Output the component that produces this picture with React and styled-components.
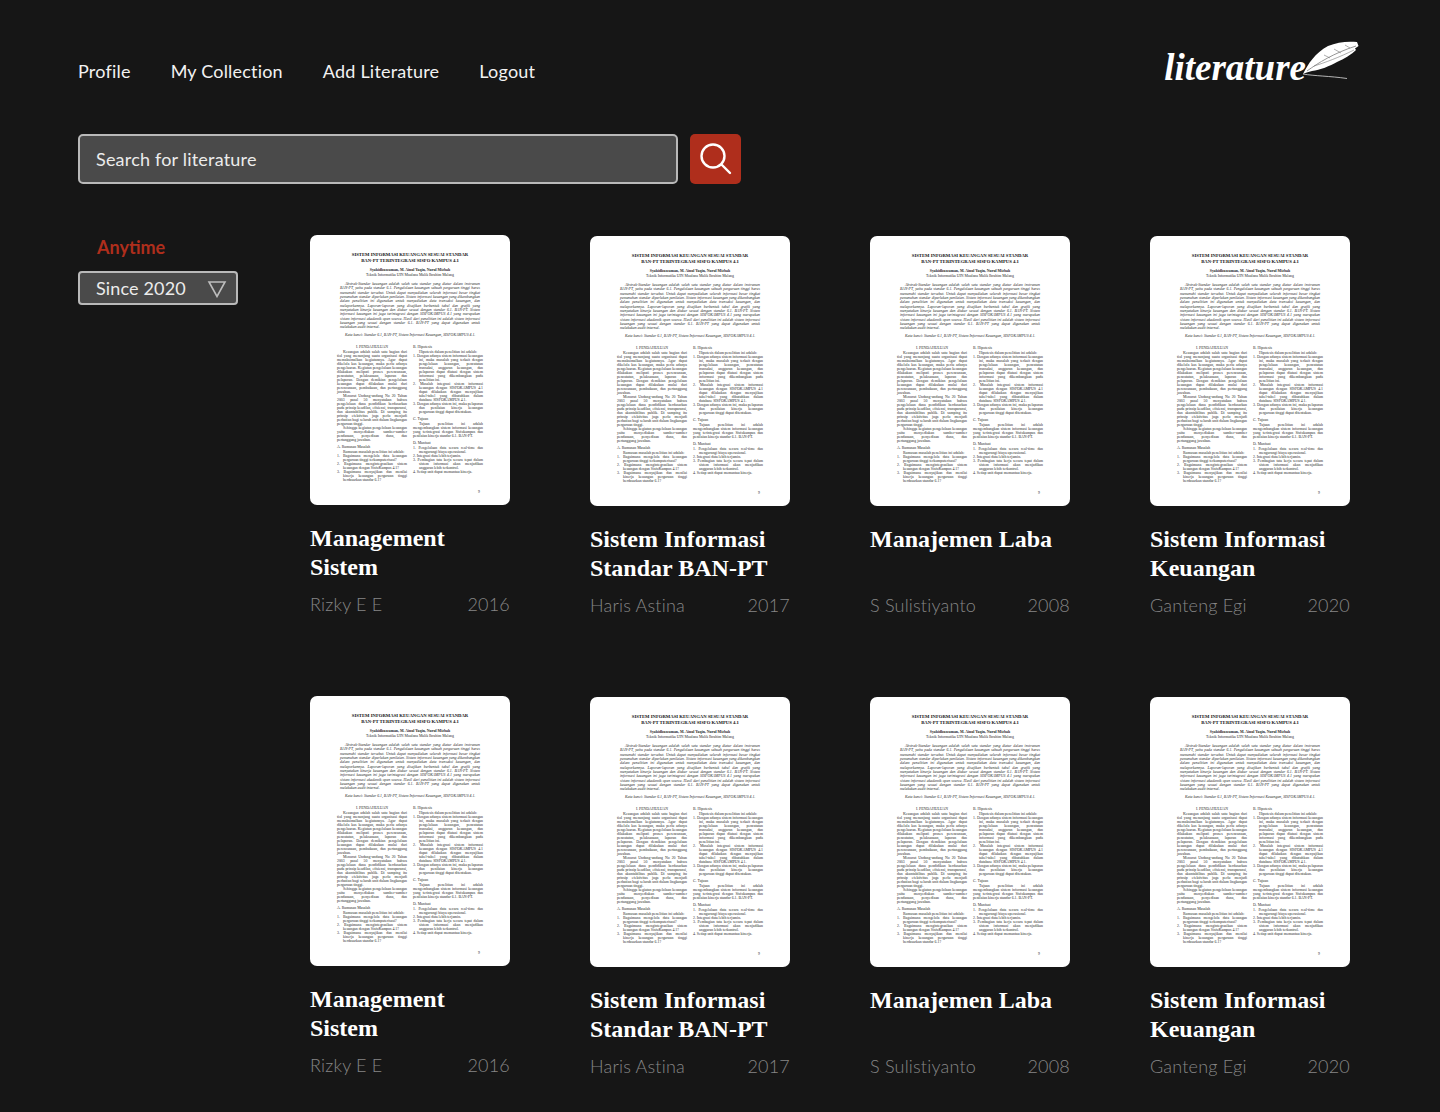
import React from "react";
import styled, { createGlobalStyle } from "styled-components";

const Global = createGlobalStyle`
  html, body { margin: 0; padding: 0; background: #161616; }
  body { font-family: Lato, "Open Sans", sans-serif; color: #fff; }
`;

const Page = styled.div`
  width: 1440px;
  height: 1112px;
  overflow: hidden;
  box-sizing: border-box;
  padding: 46px 80px 0 78px;
  background: #161616;
`;
const Header = styled.header`
  display: flex;
  align-items: center;
  justify-content: space-between;
  height: 50px;
`;
const Nav = styled.nav`
  display: flex;
  gap: 40px;
  margin-top: -1px;
`;
const NavLink = styled.a`
  font-size: 18px;
  line-height: 50px;
  color: #f2f2f2;
  letter-spacing: 0.2px;
`;
const Logo = styled.div`
  display: flex;
  align-items: flex-start;
  margin-right: -2px;
  margin-top: -13px;
`;
const LogoWord = styled.span`
  font-family: "Liberation Serif", serif;
  font-style: italic;
  font-weight: 700;
  font-size: 37px;
  line-height: 44px;
  margin-top: 7px;
  color: #fff;
`;
const Feather = styled.svg`
  width: 62px;
  height: 42px;
  margin-left: -6px;
`;
const SearchRow = styled.form`
  display: flex;
  gap: 12px;
  margin-top: 38px;
`;
const SearchField = styled.div`
  box-sizing: border-box;
  width: 600px;
  height: 50px;
  display: flex;
  align-items: center;
  padding: 0 16px 1px;
  border: 2px solid #b9b9b9;
  border-radius: 5px;
  background: #4a4a4a;
  font-size: 18px;
  letter-spacing: 0.2px;
  color: #ececec;
`;
const SearchButton = styled.button`
  box-sizing: border-box;
  width: 51px;
  height: 50px;
  padding: 0;
  border: 0;
  border-radius: 5px;
  background: #af2e1c;
  display: flex;
  align-items: center;
  justify-content: center;
`;
const Main = styled.main`
  display: grid;
  grid-template-columns: 232px 1fr;
  margin-top: 52px;
`;
const FilterLabel = styled.div`
  font-size: 18px;
  font-weight: 700;
  line-height: 22px;
  margin: 0 0 13px 19px;
  color: #af2e1c;
`;
const FilterSelect = styled.div`
  box-sizing: border-box;
  width: 160px;
  height: 34px;
  display: flex;
  align-items: center;
  justify-content: space-between;
  padding: 0 9px 1px 16px;
  border: 2px solid #b9b9b9;
  border-radius: 4px;
  background: #4a4a4a;
  font-size: 18px;
  letter-spacing: 0.15px;
  color: #ececec;
  svg { margin-top: 3px; }
`;
const BookGrid = styled.div`
  display: grid;
  grid-template-columns: repeat(4, 200px);
  column-gap: 80px;
  row-gap: 81px;
`;
const Book = styled.article`
  margin-top: ${(p) => (p.$lift ? "-1px" : "0")};
`;
const Paper = styled.div`
  box-sizing: border-box;
  width: 200px;
  height: 270px;
  padding: 17px 27px 0;
  border-radius: 7px;
  background: #fff;
  color: #2a2a2a;
  font-family: "Liberation Serif", serif;
  font-size: 3.85px;
  line-height: 4.3px;
  position: relative;
`;
const PaperTitle = styled.div`
  font-size: 4.7px;
  line-height: 6px;
  font-weight: 700;
  text-align: center;
  color: #111;
`;
const PaperAuthors = styled.div`
  margin-top: 4px;
  text-align: center;
  line-height: 4.6px;
  strong { display: block; }
`;
const Abstract = styled.p`
  margin: 5px 3px 0;
  text-align: justify;
  font-style: italic;
  text-indent: 5px;
`;
const Keywords = styled.p`
  margin: 4px 0 0 8px;
  font-style: italic;
`;
const Columns = styled.div`
  display: grid;
  grid-template-columns: 70px 70px;
  column-gap: 6px;
  margin-top: 7px;
  line-height: 4px;
`;
const Column = styled.div`
  text-align: justify;
`;
const SectionHead = styled.div`
  text-align: ${(p) => (p.$center ? "center" : "left")};
  margin: ${(p) => (p.$gap ? "3px" : "0")} 0 1px 0;
`;
const Para = styled.p`
  margin: 0;
  text-indent: 6px;
`;
const Item = styled.p`
  margin: 0;
  padding-left: 6px;
  text-indent: -6px;
`;
const PageNo = styled.span`
  position: absolute;
  right: 30px;
  bottom: 11px;
`;
const BookTitle = styled.h3`
  margin: 19px 0 0;
  min-height: 58px;
  font-family: "Liberation Serif", serif;
  font-size: 24px;
  line-height: 29px;
  font-weight: 700;
  letter-spacing: 0;
  color: #fff;
`;
const BookMeta = styled.div`
  display: flex;
  justify-content: space-between;
  margin-top: 11px;
  font-size: 18px;
  font-weight: 300;
  line-height: 22px;
  letter-spacing: 0.2px;
  color: #868686;
`;

const PaperThumb = () => (
  <Paper>
    <PaperTitle>
      SISTEM INFORMASI KEUANGAN SESUAI STANDAR
      <br />
      BAN-PT TERINTEGRASI SISFO KAMPUS 4.1
    </PaperTitle>
    <PaperAuthors>
      <strong>Syahidhuzzaman, M. Ainul Yaqin, Nurul Mizbah</strong>
      Teknik Informatika UIN Maulana Malik Ibrahim Malang
    </PaperAuthors>
    <Abstract>
      Abstrak-Standar keuangan adalah salah satu standar yang diatur dalam instrumen BAN-PT, yaitu pada standar 6.1.
      Pengelolaan keuangan sebuah perguruan tinggi harus memenuhi standar tersebut. Untuk dapat menyediakan seluruh
      informasi besar tingkat pemenuhan standar diperlukan penilaian. Sistem informasi keuangan yang dikembangkan dalam
      penelitian ini digunakan untuk menyediakan data transaksi keuangan, dan melaporkannya. Laporan-laporan yang
      disajikan berbentuk tabel dan grafik yang menyatakan kinerja keuangan dan diukur sesuai dengan standar 6.1.
      BAN-PT. Sistem informasi keuangan ini juga terintegrasi dengan SISFOKAMPUS 4.1 yang merupakan sistem informasi
      akademik open source. Hasil dari penelitian ini adalah sistem informasi keuangan yang sesuai dengan standar 6.1.
      BAN-PT yang dapat digunakan untuk melakukan audit internal.
    </Abstract>
    <Keywords>Kata kunci: Standar 6.1, BAN-PT, Sistem Informasi Keuangan, SISFOKAMPUS 4.1.</Keywords>
    <Columns>
      <Column>
        <SectionHead $center>I. PENDAHULUAN</SectionHead>
        <Para>
          Keuangan adalah salah satu bagian dari tiol yang menunjang suatu organisasi dapat memaksimalkan kegiatannya.
          Agar dapat dikelola kas keuangan, maka perlu adanya pengeluaran. Kegiatan pengelolaan keuangan dilakukan
          meliputi proses perencanaan, pencatatan, pelaksanaan, laporan dan pelaporan. Dengan demikian pengelolaan
          keuangan dapat dilakukan mulai dari perencanaan, pembukuan, dan pertanggung jawaban.
        </Para>
        <Para>
          Menurut Undang-undang No 20 Tahun 2003 pasal 50 menyatakan bahwa pengelolaan dana pendidikan berdasarkan
          pada prinsip keadilan, efisiensi, transparansi, dan akuntabilitas publik. Di samping itu prinsip efektivitas
          juga perlu menjadi perhatian bagi seluruh unit dalam lingkungan perguruan tinggi.
        </Para>
        <Para>
          Sehingga kegiatan pengelolaan keuangan yaitu menyediakan sumber-sumber pendanaan, penyediaan dana, dan
          pertanggung jawaban.
        </Para>
        <SectionHead $gap>A. Rumusan Masalah</SectionHead>
        <Para>Rumusan masalah penelitian ini adalah:</Para>
        <Item>1. Bagaimana mengelola data keuangan perguruan tinggi terkomputerisasi?</Item>
        <Item>2. Bagaimana mengintegrasikan sistem keuangan dengan SisfoKampus 4.1?</Item>
        <Item>3. Bagaimana menyajikan dan menilai kinerja keuangan perguruan tinggi berdasarkan standar 6.1?</Item>
      </Column>
      <Column>
        <SectionHead>B. Hipotesis</SectionHead>
        <Para>Hipotesis dalam penelitian ini adalah:</Para>
        <Item>1. Dengan adanya sistem informasi keuangan ini, maka masalah yang terkait dengan pengelolaan keuangan,
          pencatatan transaksi, anggaran keuangan, dan pelaporan dapat diatasi dengan sistem informasi yang
          dikembangkan pada penelitian ini.</Item>
        <Item>2. Masalah integrasi sistem informasi keuangan dengan SISFOKAMPUS 4.1 dapat dilakukan dengan menyajikan
          tabel-tabel yang dibutuhkan dalam database SISFOKAMPUS 4.1.</Item>
        <Item>3. Dengan adanya sistem ini, maka pelaporan dan penilaian kinerja keuangan perguruan tinggi dapat
          ditentukan.</Item>
        <SectionHead $gap>C. Tujuan</SectionHead>
        <Para>
          Tujuan penelitian ini adalah mengembangkan sistem informasi keuangan yang terintegrasi dengan Sisfokampus
          dan penilaian kinerja standar 6.1. BAN-PT.
        </Para>
        <SectionHead $gap>D. Manfaat</SectionHead>
        <Item>1. Pengelolaan data secara real-time dan mengurangi biaya operasional.</Item>
        <Item>2. Integrasi data lebih terjamin.</Item>
        <Item>3. Pembagian tata kerja secara tepat dalam sistem informasi akan menjadikan anggaran lebih terkontrol.</Item>
        <Item>4. Setiap unit dapat memantau kinerja.</Item>
      </Column>
    </Columns>
    <PageNo>9</PageNo>
  </Paper>
);

const books = [
  { title: "Management Sistem", author: "Rizky E E", year: 2016, lift: true },
  { title: "Sistem Informasi Standar BAN-PT", author: "Haris Astina", year: 2017 },
  { title: "Manajemen Laba", author: "S Sulistiyanto", year: 2008 },
  { title: "Sistem Informasi Keuangan", author: "Ganteng Egi", year: 2020 },
];

const SearchIcon = () => (
  <svg width="34" height="34" viewBox="0 0 34 34" fill="none" stroke="#fff" strokeWidth="2.4" strokeLinecap="round">
    <circle cx="14" cy="14" r="11.5" />
    <path d="M22.5 22.5L31 31" />
  </svg>
);

const Triangle = () => (
  <svg width="20" height="18" viewBox="0 0 20 18" fill="none" stroke="#bdbdbd" strokeWidth="1.6">
    <path d="M2 2h16L10 16.5z" />
  </svg>
);

const FeatherMark = () => (
  <Feather viewBox="0 0 62 42">
    <path d="M3 35C8 25 15 14 28 7C37 3 48 2 57 3L58.5 7L55 9.5L56 11C52 15 44 20 37 23C30 27 20 31 12 32C8 33 5 34 3 35Z" fill="#fff" />
    <path d="M7 32C18 24 34 14 56 7" stroke="#8a8a8a" strokeWidth="0.9" fill="none" />
    <path d="M14 27C24 24 40 18 54 11M24 16L30 19M34 10L41 14M45 6L50 9" stroke="#777" strokeWidth="0.6" fill="none" />
    <path d="M3 35C14 37 30 37 47 39.5" stroke="#ddd" strokeWidth="0.8" fill="none" />
  </Feather>
);

export default function App() {
  const rows = [0, 1];
  return (
    <Page>
      <Global />
      <Header>
        <Nav>
          <NavLink>Profile</NavLink>
          <NavLink>My Collection</NavLink>
          <NavLink>Add Literature</NavLink>
          <NavLink>Logout</NavLink>
        </Nav>
        <Logo>
          <LogoWord>literature</LogoWord>
          <FeatherMark />
        </Logo>
      </Header>
      <SearchRow>
        <SearchField>Search for literature</SearchField>
        <SearchButton type="button" aria-label="Search">
          <SearchIcon />
        </SearchButton>
      </SearchRow>
      <Main>
        <aside>
          <FilterLabel>Anytime</FilterLabel>
          <FilterSelect>
            Since 2020
            <Triangle />
          </FilterSelect>
        </aside>
        <BookGrid>
          {rows.flatMap((r) =>
            books.map((b) => (
              <Book key={`${r}-${b.title}`} $lift={b.lift}>
                <PaperThumb />
                <BookTitle>{b.title}</BookTitle>
                <BookMeta>
                  <span>{b.author}</span>
                  <span>{b.year}</span>
                </BookMeta>
              </Book>
            ))
          )}
        </BookGrid>
      </Main>
    </Page>
  );
}
